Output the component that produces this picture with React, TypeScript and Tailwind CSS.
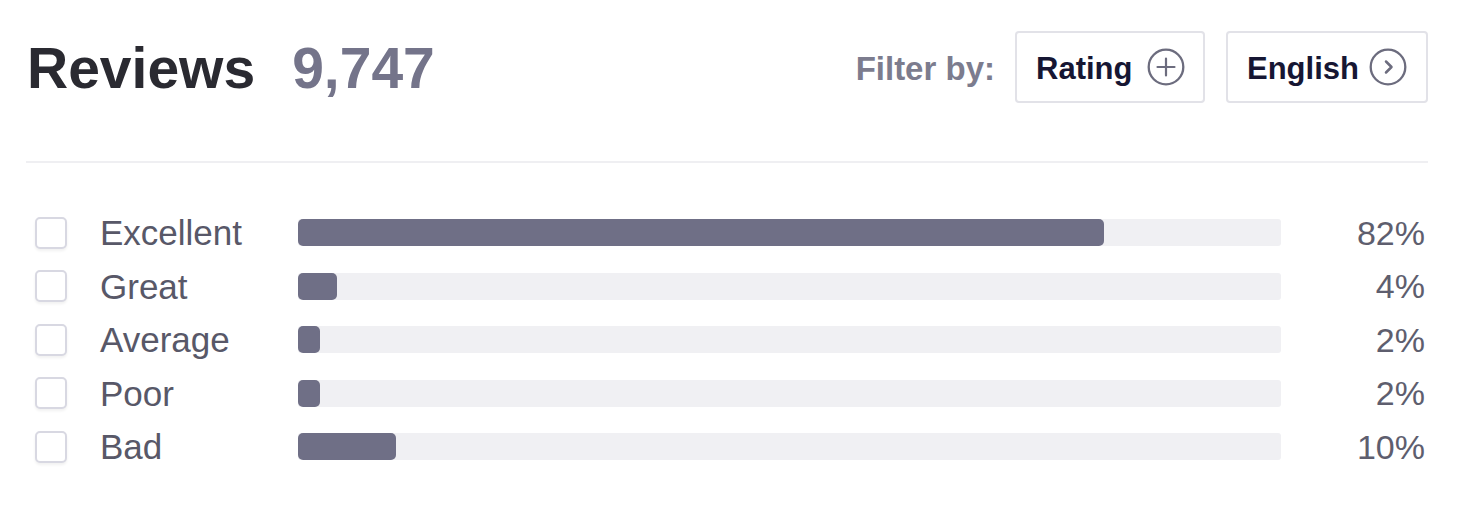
import React from "react";

const rows = [
  { label: "Excellent", pct: 82, w: 82 },
  { label: "Great", pct: 4, w: 4 },
  { label: "Average", pct: 2, w: 2.2 },
  { label: "Poor", pct: 2, w: 2.2 },
  { label: "Bad", pct: 10, w: 10 },
];

function PlusIcon() {
  return (
    <svg width="38" height="38" viewBox="0 0 38 38" fill="none">
      <circle cx="19" cy="19" r="17.3" stroke="#6c6c7e" strokeWidth="2.3" />
      <path d="M19 10.5v17M10.5 19h17" stroke="#6c6c7e" strokeWidth="2.2" strokeLinecap="round" />
    </svg>
  );
}

function ChevronIcon() {
  return (
    <svg width="38" height="38" viewBox="0 0 38 38" fill="none">
      <circle cx="19" cy="19" r="17.3" stroke="#6c6c7e" strokeWidth="2.3" />
      <path d="M17 13.5l5.5 5.5-5.5 5.5" stroke="#6c6c7e" strokeWidth="2.5" strokeLinecap="round" strokeLinejoin="round" />
    </svg>
  );
}

export default function App() {
  return (
    <div
      className="w-[1464px] h-[522px] bg-white pl-[26px] pr-[36px] pt-[31px]"
      style={{ fontFamily: '"Liberation Sans", Arial, sans-serif' }}
    >
      <div className="flex h-[72px] items-center justify-between">
        <div className="mt-[2px] flex items-center gap-[37px] pl-[1px]">
          <span className="text-[57px] font-bold leading-none text-[#2a2a31]">Reviews</span>
          <span className="text-[57px] font-bold leading-none text-[#74748a]">9,747</span>
        </div>
        <div className="flex items-center">
          <span className="mr-[20px] mt-[3px] text-[33px] font-bold leading-none text-[#7c7c8e]">Filter by:</span>
          <div className="flex h-[72px] w-[190px] items-center justify-between rounded-[4px] border-2 border-[#e2e2e8] pl-[19px] pr-[18px]">
            <span className="mt-[3px] text-[31px] font-bold leading-none text-[#161633]">Rating</span>
            <PlusIcon />
          </div>
          <div className="ml-[21px] flex h-[72px] w-[202px] items-center justify-between rounded-[4px] border-2 border-[#e2e2e8] pl-[19px] pr-[19px]">
            <span className="mt-[3px] text-[31px] font-bold leading-none text-[#161633]">English</span>
            <ChevronIcon />
          </div>
        </div>
      </div>

      <div className="mt-[58px] h-[2px] bg-[#efeff2]" />

      <div className="mt-[43px] flex flex-col">
        {rows.map((r) => (
          <div key={r.label} className="flex h-[53.5px] items-center">
            <div className="ml-[9px] h-[32px] w-[32px] shrink-0 rounded-[5px] border-2 border-[#d8d8e2] bg-white shadow-[0_2px_3px_rgba(0,0,0,0.06)]" />
            <div className="ml-[33px] w-[198px] shrink-0 text-[35px] leading-none text-[#585868]">{r.label}</div>
            <div className="h-[27px] w-[983px] shrink-0 rounded-[3px] bg-[#f0f0f3]">
              <div className="h-full rounded-[5px] bg-[#6f6f86]" style={{ width: `${r.w}%` }} />
            </div>
            <div className="flex-1 pr-[3px] text-right text-[34px] leading-none text-[#5e5e6e]">{r.pct}%</div>
          </div>
        ))}
      </div>
    </div>
  );
}
